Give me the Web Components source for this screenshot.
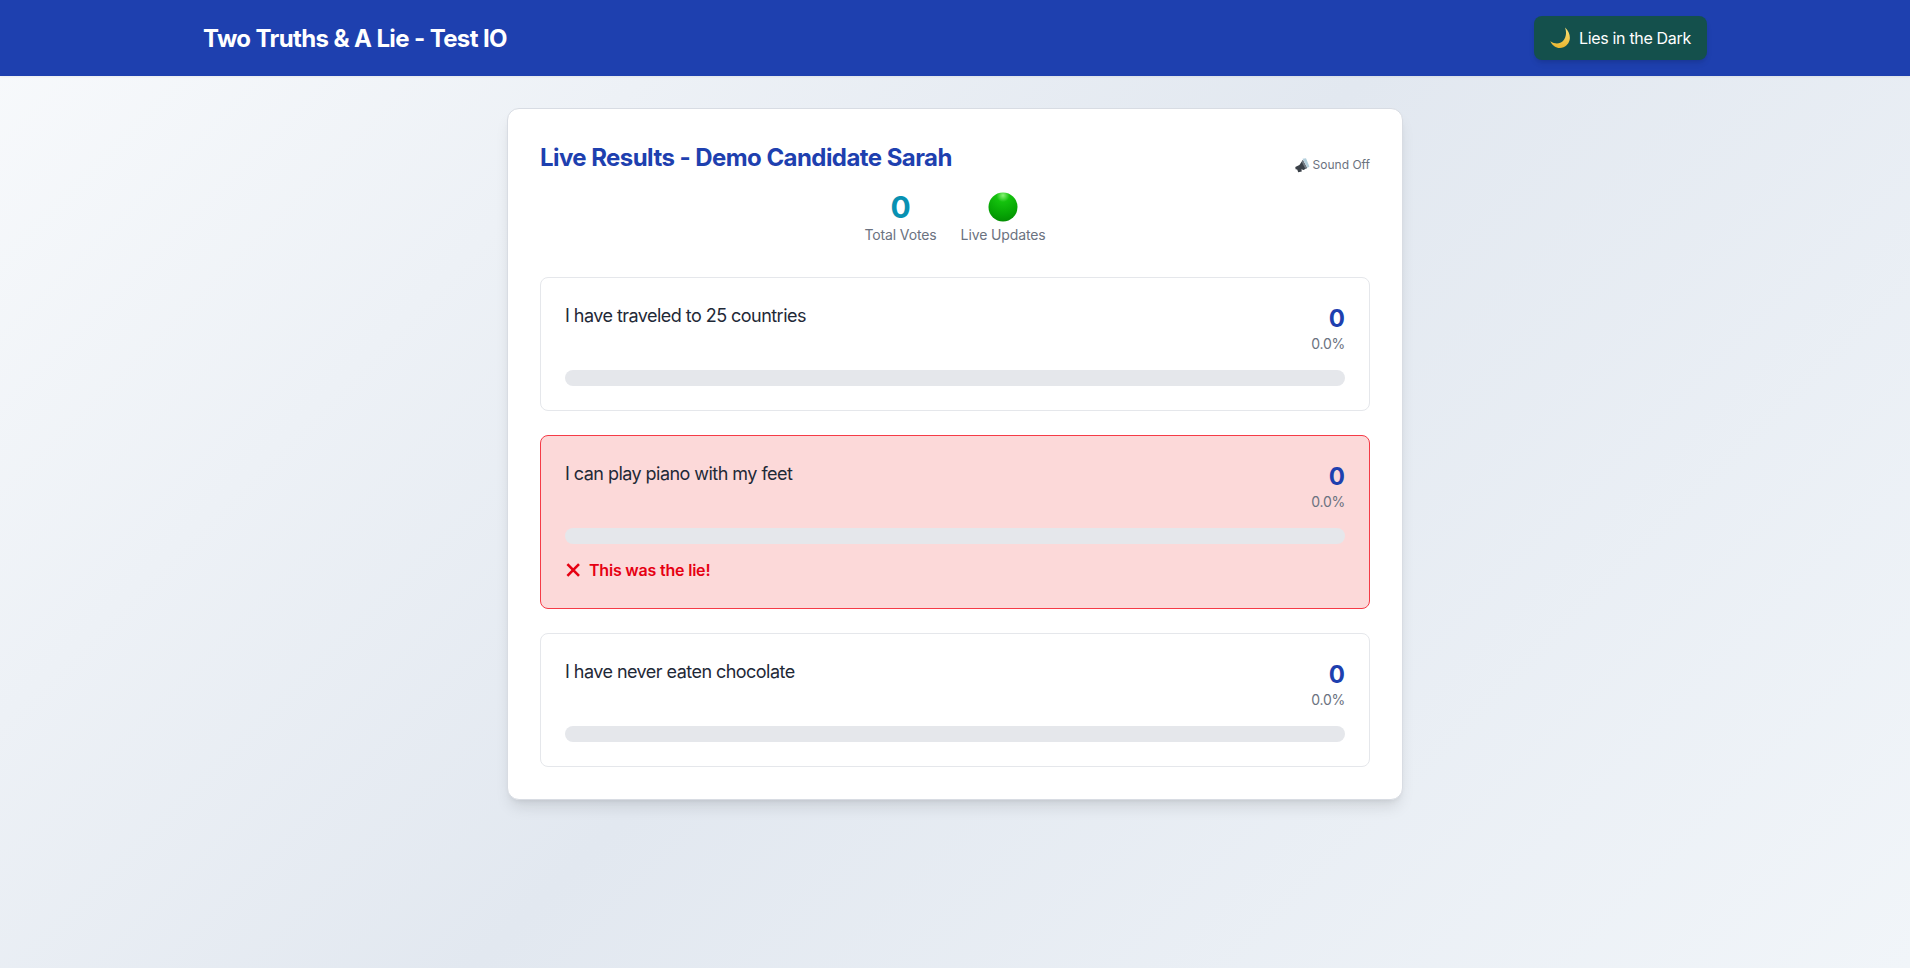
<!DOCTYPE html>
<html lang="en"><head><meta charset="utf-8"><title>Two Truths & A Lie</title>
<style>
html,body{margin:0;padding:0}
body{min-height:968px;font-family:Inter,"Liberation Sans",sans-serif;background:linear-gradient(135deg,#f8fafc 0%,#e2e8f0 50%,#f1f5f9 100%);color:#1f2937}
</style></head><body>
<app-header></app-header>
<results-card heading="Live Results - Demo Candidate Sarah">
  <stat-row slot="stats">
    <stat-item label="Total Votes"><span style="color:#0891b2">0</span></stat-item>
    <stat-item label="Live Updates"><live-dot></live-dot></stat-item>
  </stat-row>
  <result-item text="I have traveled to 25 countries"></result-item>
  <result-item text="I can play piano with my feet" lie></result-item>
  <result-item text="I have never eaten chocolate"></result-item>
</results-card>
<script>
function def(name, html){
  customElements.define(name, class extends HTMLElement{
    connectedCallback(){
      if(this.shadowRoot) return;
      const r=this.attachShadow({mode:'open'});
      r.innerHTML=typeof html==='function'?html(this):html;
    }
  });
}
def('theme-button',`<style>
:host{display:block}
button{display:flex;align-items:center;gap:7px;width:173px;height:44px;box-sizing:border-box;padding:0 16px;border:0;border-radius:8px;background:#14504c;color:#fff;font:400 16px/24px Inter,sans-serif;letter-spacing:-.33px;box-shadow:0 4px 6px -1px rgba(0,0,0,.1),0 2px 4px -2px rgba(0,0,0,.1)}
svg{display:block;width:22px;height:22px;flex:none}
span{white-space:nowrap}
</style><button><svg viewBox="0 0 22 22"><defs><linearGradient id="m" x1="0" y1="0" x2="0" y2="1"><stop offset="0" stop-color="#fbe27a"/><stop offset="1" stop-color="#eab52e"/></linearGradient></defs><path d="M15 .5C21.5 6.5 22 16 13.5 20.2 8.5 22.4 3 20 .3 14.2 5 17.4 10 17 13 14 16 10.8 17 5.6 15 .5z" fill="url(#m)"/></svg><span>Lies in the Dark</span></button>`);
def('app-header',`<style>
:host{display:block;background:#1e40af;box-shadow:0 1px 2px rgba(0,0,0,.05)}
.in{max-width:1504px;margin:0 auto;padding:16px 0;display:flex;justify-content:space-between;align-items:center}
h1{margin:0;height:32px;font:700 24px/34px Inter,sans-serif;letter-spacing:-.62px;color:#fff}
</style><div class="in"><h1>Two Truths &amp; A Lie - Test IO</h1><theme-button></theme-button></div>`);
def('sound-toggle',`<style>
:host{display:flex;align-items:center;gap:3px;font:400 12px/16px Inter,sans-serif;color:#6b7280}
svg{display:block;width:15px;height:15px}
</style><svg viewBox="0 0 15 15"><path d="M7.5 .8 11 .3 14.4 8.4 12.5 10z" fill="#b4cfdc"/><path d="M.3 9 4.4 7 7.8 2 12 10 8.6 12 6.4 11.2 6.8 13.6 3.2 14.2 2.2 11.6 .6 11.2z" fill="#3a4048"/><path d="M7.8 2 12 10 10.4 10.9 6.8 4z" fill="#737b85"/></svg><span>Sound Off</span>`);
def('results-card',(h)=>`<style>
:host{display:block;box-sizing:border-box;width:896px;margin:32px auto 0;padding:32px;background:#fff;border:1px solid #d8dce3;border-radius:12px;box-shadow:0 10px 15px -3px rgba(0,0,0,.1),0 4px 6px -4px rgba(0,0,0,.1)}
.top{display:flex;justify-content:space-between;align-items:flex-end;height:32px;margin-bottom:16px}
h2{margin:0;height:32px;font:700 24px/34px Inter,sans-serif;letter-spacing:-.56px;color:#1e40af}
.list{display:flex;flex-direction:column;gap:24px;margin-top:32px}
</style><div class="top"><h2>${h.getAttribute('heading')}</h2><sound-toggle></sound-toggle></div><slot name="stats"></slot><div class="list"><slot></slot></div>`);
def('stat-row',`<style>:host{display:flex;justify-content:center;gap:24px}</style><slot></slot>`);
def('stat-item',(h)=>`<style>
:host{display:block;text-align:center}
.v{font:700 30px/36px Inter,sans-serif;height:36px;display:flex;justify-content:center;align-items:center}
.l{font:400 14px/20px Inter,sans-serif;letter-spacing:-.12px;color:#6b7280}
</style><div class="v"><slot></slot></div><div class="l">${h.getAttribute('label')}</div>`);
def('live-dot',`<style>:host{display:block;width:30px;height:30px}svg{display:block}</style><svg width="30" height="30" viewBox="0 0 30 30"><defs><radialGradient id="g" cx=".5" cy=".1" r=".95"><stop offset="0" stop-color="#86f274"/><stop offset=".24" stop-color="#14c20d"/><stop offset=".7" stop-color="#06a404"/><stop offset="1" stop-color="#028a02"/></radialGradient></defs><circle cx="15" cy="15" r="14.5" fill="url(#g)"/></svg>`);
def('result-item',(h)=>{const lie=h.hasAttribute('lie');return `<style>
:host{display:block;box-sizing:border-box;padding:24px;border-radius:8px;border:1px solid ${lie?'#f53b47':'#e5e7eb'};background:${lie?'#fcd9d9':'#fff'}}
.row{display:flex;justify-content:space-between;align-items:flex-start;margin-bottom:16px}
.t{font:400 18px/28px Inter,sans-serif;letter-spacing:-.54px;color:#1f2937}
.n{text-align:right}
.c{height:32px;font:700 24px/34px Inter,sans-serif;color:#1e40af}
.p{font:400 14px/20px Inter,sans-serif;letter-spacing:-.25px;color:#6b7280}
.bar{height:16px;border-radius:8px;background:#e5e7eb}
.lie{display:flex;align-items:center;gap:8px;height:24px;margin-top:14px;padding-bottom:2px;font:600 16px/24px Inter,sans-serif;letter-spacing:-.2px;color:#e60012}
svg{display:block;width:16px;height:16px}
</style><div class="row"><div class="t">${h.getAttribute('text')}</div><div class="n"><div class="c">0</div><div class="p">0.0%</div></div></div><div class="bar"></div>${lie?`<div class="lie"><svg viewBox="0 0 16 16"><path d="M2.4 2.2 14 13.8M14 2.2 2.4 13.8" stroke="#e60012" stroke-width="2.6" stroke-linecap="butt" fill="none"/></svg><span>This was the lie!</span></div>`:''}`});
</script>
</body></html>
